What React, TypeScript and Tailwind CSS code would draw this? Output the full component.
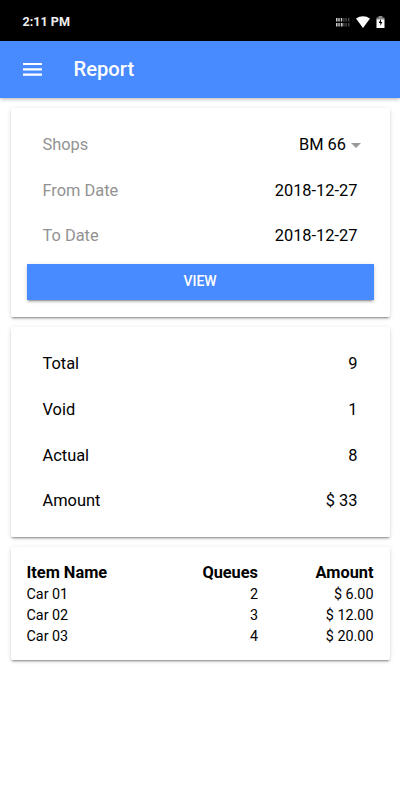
import type { ReactNode } from 'react';

const summary = [
  { label: 'Total', value: '9' },
  { label: 'Void', value: '1' },
  { label: 'Actual', value: '8' },
  { label: 'Amount', value: '$ 33' },
];

const items = [
  { name: 'Car 01', queues: 2, amount: '$ 6.00' },
  { name: 'Car 02', queues: 3, amount: '$ 12.00' },
  { name: 'Car 03', queues: 4, amount: '$ 20.00' },
];

function Card({ className, children }: { className: string; children: ReactNode }) {
  return (
    <section
      className={`rounded-[2px] bg-white shadow-[0_2px_2px_0_rgba(0,0,0,0.14),0_3px_1px_-2px_rgba(0,0,0,0.2),0_1px_5px_0_rgba(0,0,0,0.12)] ${className}`}
    >
      {children}
    </section>
  );
}

function Row({ label, muted, children }: { label: string; muted?: boolean; children: ReactNode }) {
  return (
    <div className="flex h-[45.8px] items-center justify-between pr-[32px] pl-[32px] text-[16.4px]">
      <span className={muted ? 'text-[#929292]' : ''}>{label}</span>
      <span className="flex items-center">{children}</span>
    </div>
  );
}

function StatusBar() {
  return (
    <div className="flex h-[41px] items-center justify-between bg-black pt-[3px] pr-[15px] pl-[22.5px] text-white">
      <span className="text-[12.6px] font-bold text-[#eee]">2:11 PM</span>
      <div className="flex items-center">
        <svg width="14" height="10" viewBox="0 0 14 10" fill="#fff">
          <path d="M0 1h1.5v3.5H0zM2.3 1h1.4v3.5H2.3zM4.8 1h1.4v3.5H4.8zM0 6h1.5v3.5H0zM2.3 6h1.4v3.5H2.3zM4.8 6h1.8v3.5H4.8z" opacity=".8" />
          <path d="M7.4 1h1v3.5h-1zM9.6 1h1v3.5h-1zM12.3 1h1v3.5h-1zM7.4 6h1v3.5h-1zM9.6 6h1v3.5h-1zM12.3 6h1v3.5h-1z" opacity=".4" />
        </svg>
        <svg className="ml-[6px]" width="14" height="12" viewBox="0 0 14 12" fill="#fff">
          <path d="M0 2.6C4-.7 10-.7 14 2.6L7 12z" />
        </svg>
        <svg className="ml-[6px]" width="9" height="12" viewBox="0 0 9 12">
          <path d="M2.5 0h4v1.5h2V4h-8V1.5h2z" fill="#888" />
          <path d="M.5 3.5h8V12h-8z" fill="#fff" />
          <path d="M5 3L2.7 7h1.6v2.8L6.4 6H5z" fill="#000" />
        </svg>
      </div>
    </div>
  );
}

export default function App() {
  return (
    <div className="min-h-[800px] bg-white text-black" style={{ fontFamily: 'Roboto, sans-serif' }}>
      <StatusBar />
      <header className="flex h-[56.5px] items-center bg-[#488aff] pl-[23px] text-white shadow-[0_1px_4px_rgba(0,0,0,0.3)]">
        <button aria-label="Menu">
          <svg width="19" height="13" viewBox="0 0 19 13" fill="#fff">
            <path d="M0 0h19v2.1H0zM0 5.3h19v2.1H0zM0 10.6h19v2.1H0z" />
          </svg>
        </button>
        <h1 className="ml-[31.5px] text-[20.2px] font-medium">Report</h1>
      </header>

      <main className="flex flex-col gap-[10px] px-[10.5px] pt-[10.5px]">
        <Card className="h-[209.4px] pt-[14.2px]">
          <Row label="Shops" muted>
            BM 66
            <svg className="-mr-[3.5px] ml-[5px]" width="10" height="5" viewBox="0 0 10 5" fill="#999">
              <path d="M0 0h10L5 5z" />
            </svg>
          </Row>
          <Row label="From Date" muted>2018-12-27</Row>
          <Row label="To Date" muted>2018-12-27</Row>
          <div className="px-[16px] pt-[4px]">
            <button className="block h-[36.5px] w-full bg-[#488aff] pb-px text-[14px] font-medium text-white shadow-[0_2px_2px_0_rgba(0,0,0,0.14),0_3px_1px_-2px_rgba(0,0,0,0.2),0_1px_5px_0_rgba(0,0,0,0.12)]">
              VIEW
            </button>
          </div>
        </Card>

        <Card className="h-[209.5px] pt-[14px]">
          {summary.map((row) => (
            <Row key={row.label} label={row.label}>{row.value}</Row>
          ))}
        </Card>

        <Card className="h-[113px] px-[16px] pt-[15px]">
          <table className="w-full table-fixed text-right text-[14.35px] leading-[21.2px]">
            <thead className="text-[16.35px] leading-[22px]">
              <tr>
                <th className="w-[115.5px] text-left font-bold">Item Name</th>
                <th className="w-[116px] font-bold">Queues</th>
                <th className="font-bold">Amount</th>
              </tr>
            </thead>
            <tbody>
              {items.map((item) => (
                <tr key={item.name}>
                  <td className="text-left">{item.name}</td>
                  <td>{item.queues}</td>
                  <td>{item.amount}</td>
                </tr>
              ))}
            </tbody>
          </table>
        </Card>
      </main>
    </div>
  );
}
